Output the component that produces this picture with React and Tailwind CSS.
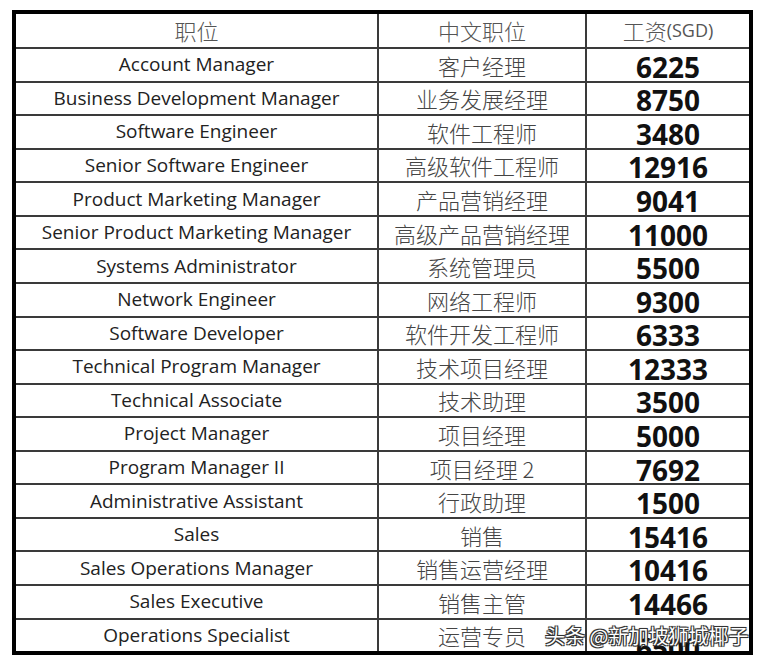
import React from 'react';

const rows = [
  ['Account Manager', '客户经理', '6225'],
  ['Business Development Manager', '业务发展经理', '8750'],
  ['Software Engineer', '软件工程师', '3480'],
  ['Senior Software Engineer', '高级软件工程师', '12916'],
  ['Product Marketing Manager', '产品营销经理', '9041'],
  ['Senior Product Marketing Manager', '高级产品营销经理', '11000'],
  ['Systems Administrator', '系统管理员', '5500'],
  ['Network Engineer', '网络工程师', '9300'],
  ['Software Developer', '软件开发工程师', '6333'],
  ['Technical Program Manager', '技术项目经理', '12333'],
  ['Technical Associate', '技术助理', '3500'],
  ['Project Manager', '项目经理', '5000'],
  ['Program Manager II', '项目经理 2', '7692'],
  ['Administrative Assistant', '行政助理', '1500'],
  ['Sales', '销售', '15416'],
  ['Sales Operations Manager', '销售运营经理', '10416'],
  ['Sales Executive', '销售主管', '14466'],
  ['Operations Specialist', '运营专员', '6500'],
];

const latin = "font-['Open_Sans','Noto_Sans_CJK_SC',sans-serif]";
const cjk = "font-['Noto_Sans_CJK_SC',sans-serif]";

export default function App() {
  return (
    <div className="w-[758px] h-[660px] bg-white pl-[12px] pt-[10px]">
      <div className="relative w-[741px] h-[645px] border-4 border-black flex flex-col">
        <div className="flex-1 grid grid-cols-[361px_208px_1fr]">
          <div className={`flex items-center justify-center text-[22px] font-light text-[#555] ${cjk}`}>职位</div>
          <div className={`flex items-center justify-center border-l-2 border-[#3a3a3a] text-[22px] font-light text-[#555] ${cjk}`}>中文职位</div>
          <div className="flex items-center justify-center border-l-2 border-[#3a3a3a] text-[#555]">
            <span className={`text-[22px] font-light ${cjk}`}>工资</span>
            <span className={`text-[18px] ${latin}`}>(SGD)</span>
          </div>
        </div>
        {rows.map(([en, zh, pay], i) => {
          const last = i === rows.length - 1;
          return (
            <div key={en} className="flex-1 grid grid-cols-[361px_208px_1fr] border-t-2 border-[#3a3a3a]">
              <div className={`flex items-center justify-center text-[19px] leading-none text-[#222] ${latin}`}>{en}</div>
              <div className={`flex items-center justify-center border-l-2 border-[#3a3a3a] text-[22px] leading-none font-light text-[#444] ${cjk}`}>{zh}</div>
              <div className={`flex items-center justify-center border-l-2 border-[#3a3a3a] ${last ? 'overflow-hidden' : ''}`}>
                <span className={`text-[28px] leading-[26px] font-bold text-[#111] ${latin} ${last ? 'translate-y-[13px]' : 'translate-y-[2px]'}`}>{pay}</span>
              </div>
            </div>
          );
        })}
        <div className={`absolute left-[529px] bottom-[5px] text-[20px] leading-none text-white ${cjk} [text-shadow:1px_1px_0_#333,-1px_-1px_0_#333,1px_-1px_0_#333,-1px_1px_0_#333,0_0_2px_#000]`}>
          头条 @新加坡狮城椰子
        </div>
      </div>
    </div>
  );
}
